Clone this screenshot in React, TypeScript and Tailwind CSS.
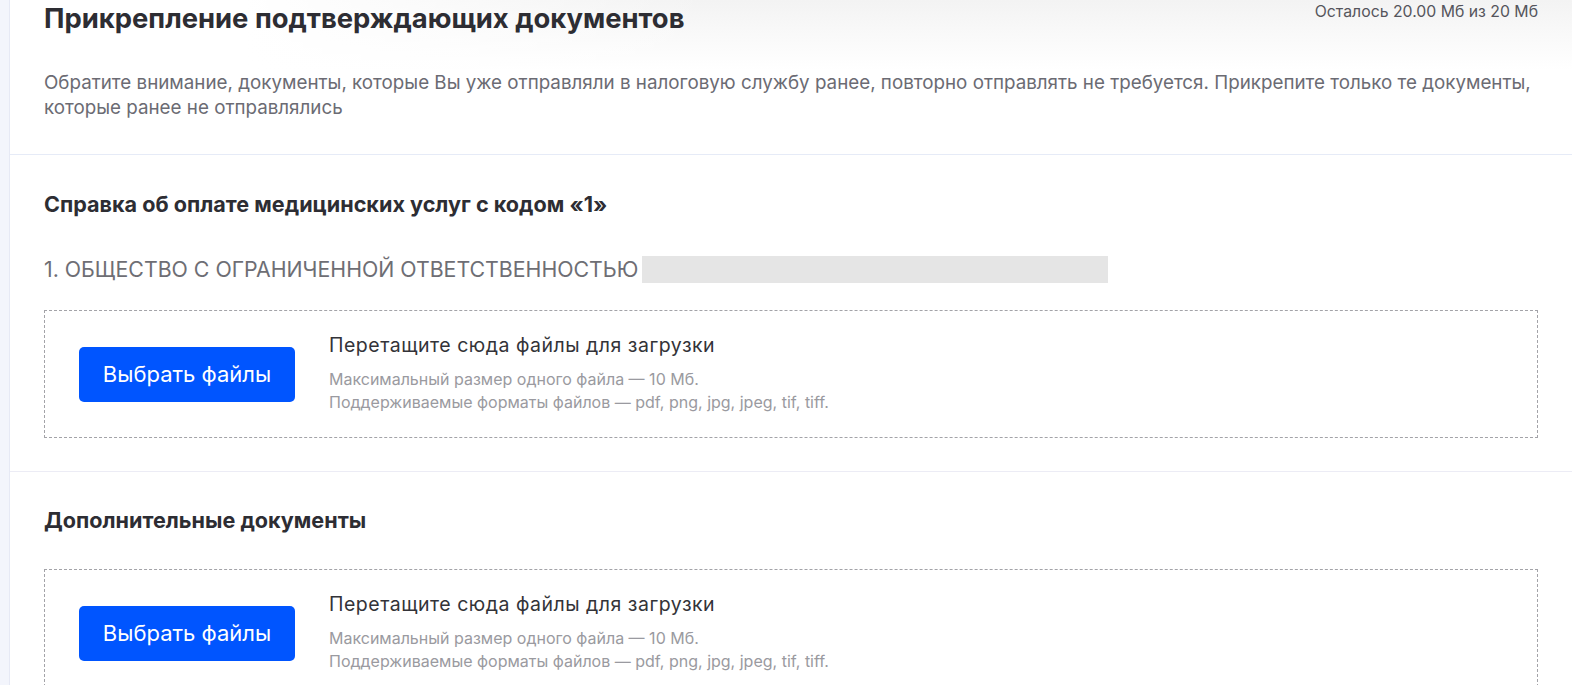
import React from 'react';

const font = { fontFamily: 'Inter, Roboto, "Noto Sans", sans-serif' };

const UploadBox: React.FC = () => (
  <div className="flex items-center border border-dashed border-[#a3a3a8] h-[128px] pl-[34px]">
    <button className="w-[216px] h-[55px] rounded-[5px] bg-[#0055ff] text-white text-[22px] leading-none">
      Выбрать файлы
    </button>
    <div className="ml-[34px] flex flex-col -mt-[1px]">
      <div className="text-[19.5px] leading-[22px] tracking-[0.5px] text-[#333338]">Перетащите сюда файлы для загрузки</div>
      <div className="mt-[12px] text-[16px] leading-[23px] text-[#9a9aa0]">
        Максимальный размер одного файла — 10 Мб.
        <br />
        Поддерживаемые форматы файлов — pdf, png, jpg, jpeg, tif, tiff.
      </div>
    </div>
  </div>
);

export default function App() {
  return (
    <div style={font} className="flex w-[1572px] h-[685px] overflow-hidden bg-white">
      {/* left rail */}
      <div className="w-[10px] shrink-0 bg-[#f3f5fc] border-r border-[#e6e9f5]" />

      <div className="flex-1 flex flex-col">
        {/* header */}
        <div className="px-[34px] pb-[34px] border-b border-[#e6ebf7] bg-[linear-gradient(to_right,white_15%,rgba(255,255,255,0)_45%),linear-gradient(to_bottom,#f3f3f3,white_70px)]">
          <div className="flex items-start justify-between">
            <h1 className="text-[27.4px] leading-[36px] font-bold text-[#2d2d33]">
              Прикрепление подтверждающих документов
            </h1>
            <div className="text-[15.8px] leading-[24px] text-[#55555c]">Осталось 20.00 Мб из 20 Мб</div>
          </div>
          <p className="mt-[34px] text-[18.8px] leading-[25px] text-[#6b6b73]">
            Обратите внимание, документы, которые Вы уже отправляли в налоговую службу ранее, повторно отправлять не требуется. Прикрепите только те документы, которые ранее не отправлялись
          </p>
        </div>

        {/* medical section */}
        <div className="px-[34px] pt-[36px] pb-[33px] border-b border-[#ececf5]">
          <h2 className="text-[21.6px] leading-[26px] font-bold text-[#2d2d33]">
            Справка об оплате медицинских услуг с кодом «1»
          </h2>
          <div className="mt-[38px] flex items-center">
            <span className="text-[21.3px] leading-[28px] text-[#6e6e74]">1. ОБЩЕСТВО С ОГРАНИЧЕННОЙ ОТВЕТСТВЕННОСТЬЮ</span>
            <span className="ml-[4px] w-[466px] h-[27px] bg-[#e5e5e5]" />
          </div>
          <div className="mt-[27px]">
            <UploadBox />
          </div>
        </div>

        {/* additional docs */}
        <div className="px-[34px] pt-[35px]">
          <h2 className="text-[21.6px] leading-[26px] font-bold text-[#2d2d33]">Дополнительные документы</h2>
          <div className="mt-[36px]">
            <UploadBox />
          </div>
        </div>
      </div>
    </div>
  );
}
